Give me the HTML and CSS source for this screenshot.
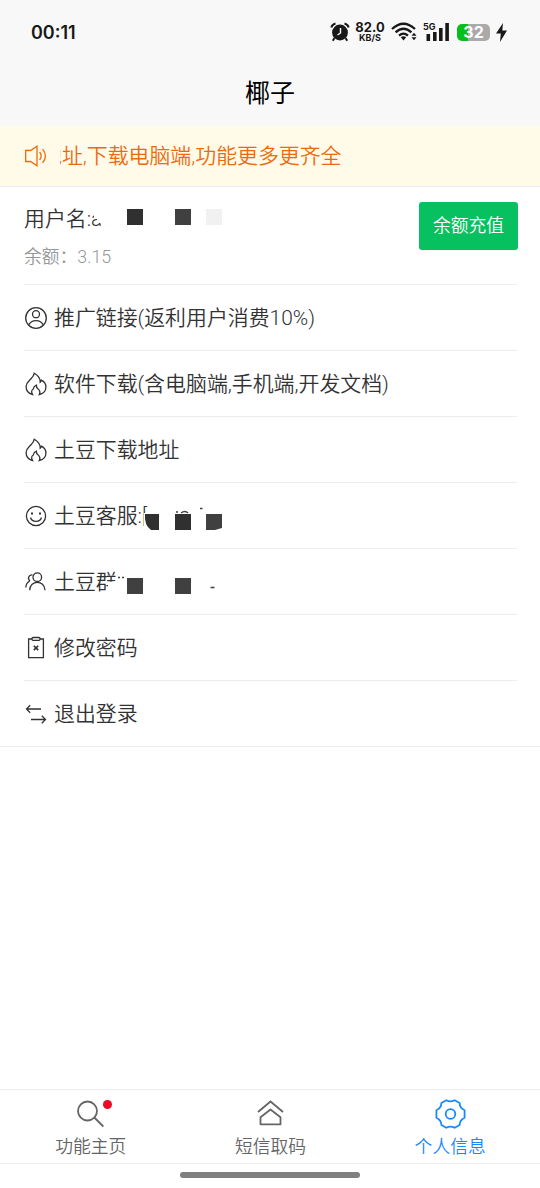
FILE: index.html
```html
<!DOCTYPE html>
<html lang="zh-CN">
<head>
    <meta charset="UTF-8">
    <meta name="viewport" content="width=device-width, initial-scale=1.0">
    <title>椰子</title>
    <link rel="stylesheet" href="styles.css">
</head>
<body>
    <div class="page">
        <header class="status-bar">
            <span class="time">00:11</span>
            <div class="status-icons">
                <svg class="alarm" width="20" height="20" viewBox="0 0 20 20">
                    <path d="M1.300 5.500 C1.800 3.500 3.300 2 5.500 1.500 M18.700 5.500 C18.200 3.500 16.700 2 14.500 1.500" fill="none" stroke="#181818" stroke-width="2"/>
                    <circle cx="10" cy="10.500" r="7.900" fill="#181818"/>
                    <path d="M4.500 16 L2.800 18.800 M15.500 16 L17.200 18.800" stroke="#181818" stroke-width="2"/>
                    <path d="M10.500 6 V11 L7.500 13" fill="none" stroke="#f8f8f8" stroke-width="1.400"/>
                </svg>
                <div class="speed"><b>82.0</b><i>KB/S</i></div>
                <svg class="wifi" width="26" height="20" viewBox="0 0 26 20">
                    <g fill="none" stroke="#181818" stroke-width="2.300">
                        <path d="M1 7 Q12.500 -3.600 24 7"/>
                        <path d="M4.600 10.400 Q12.500 3 20.400 10.400"/>
                        <path d="M8 13.700 Q12.500 9.600 17 13.700"/>
                    </g>
                    <path d="M9.800 15.300 Q12.500 13.300 15.200 15.300 L12.500 18.500 Z" fill="#181818"/>
                    <path d="M20.500 13.800 L23 10.800 L25.500 13.800 Z M20.500 15.300 L23 18.300 L25.500 15.300 Z" fill="#181818"/>
                </svg>
                <div class="signal">
                    <span>5G</span>
                    <svg width="26" height="20" viewBox="0 0 26 20">
                        <path d="M3.500 12h3.600v7H3.500z M10 10h3.600v9H10z M16 6h3.600v13H16z M22.300 1h3.600v18h-3.600z" fill="#181818"/>
                    </svg>
                </div>
                <div class="battery"><span>32</span></div>
                <svg class="bolt" width="11" height="19" viewBox="0 0 11 19">
                    <path d="M7 0 L0 10.500 H4.800 L4 19 L11 7.500 H6.300 Z" fill="#181818"/>
                </svg>
            </div>
        </header>
        <h1 class="nav-title">椰子</h1>

        <div class="notice">
            <svg width="24" height="24" viewBox="0 0 24 24" fill="none" stroke="#ed6a0c" stroke-width="1.300">
                <path d="M1.700 6.500 H6.500 L13 2.200 V21.800 L6.500 17.500 H1.700 Z"/>
                <path d="M15.600 8 Q18.800 12 15.600 16 M18.600 5.200 Q24.200 12 18.600 18.800"/>
            </svg>
            <div class="notice-wrap"><span>地址,下载电脑端,功能更多更齐全</span></div>
        </div>

        <div class="user">
            <div class="user-info">
                <div class="user-name">用户名:a
                    <svg class="mask" width="160" height="30" viewBox="84 203 160 30">
                        <path d="M94 203 H244 V233 H102 V224 L97 222 V217 L94 217 Z" fill="#fff"/>
                        <path d="M127 209h16v16h-16z" fill="#303030"/>
                        <path d="M175 209h16v16h-16z" fill="#404040"/>
                        <path d="M206 209h16v16h-16z" fill="#f1f1f1"/>
                    </svg>
                </div>
                <div class="balance">余额：3.15</div>
            </div>
            <button class="recharge" type="button">余额充值</button>
        </div>

        <div class="list">
            <div class="cell">
                <svg class="cell-icon" viewBox="0 0 24 24">
                    <circle cx="12" cy="12" r="10.300"/>
                    <circle cx="12" cy="8.200" r="3.500"/>
                    <path d="M4.700 19 C7.500 13.200 16.500 13.200 19.300 19"/>
                </svg>
                <span>推广链接(返利用户消费10%)</span>
            </div>
            <div class="cell">
                <svg class="cell-icon" viewBox="0 0 24 24">
                    <path d="M8.500 22.500 C4.500 21.500 2.100 18.500 2.100 14.500 C2.100 10.500 5 9 7.200 6.500 C9.300 4.500 10 3 10.300 1.200 C13.500 3 16.300 6.500 16.200 10.200 C16.900 9.700 17.200 9 17.300 8.200 C20 9.500 21.900 12 21.900 15 C21.900 18.700 19.300 21.700 15.300 22.500 C16.500 20 15.500 18 13.900 16.800 C12.800 15.900 12.300 14.800 12.400 13.200 C10.400 14 9.500 15.300 9.300 17 C7.300 18 7.200 20.300 8.500 22.500 Z"/>
                </svg>
                <span>软件下载(含电脑端,手机端,开发文档)</span>
            </div>
            <div class="cell">
                <svg class="cell-icon" viewBox="0 0 24 24">
                    <path d="M8.500 22.500 C4.500 21.500 2.100 18.500 2.100 14.500 C2.100 10.500 5 9 7.200 6.500 C9.300 4.500 10 3 10.300 1.200 C13.500 3 16.300 6.500 16.200 10.200 C16.900 9.700 17.200 9 17.300 8.200 C20 9.500 21.900 12 21.900 15 C21.900 18.700 19.300 21.700 15.300 22.500 C16.500 20 15.500 18 13.900 16.800 C12.800 15.900 12.300 14.800 12.400 13.200 C10.400 14 9.500 15.300 9.300 17 C7.300 18 7.200 20.300 8.500 22.500 Z"/>
                </svg>
                <span>土豆下载地址</span>
            </div>
            <div class="cell">
                <svg class="cell-icon" viewBox="0 0 24 24">
                    <circle cx="12" cy="12" r="9.600"/>
                    <path d="M6.500 13.500 C8 18.600 16 18.600 17.500 13.500"/>
                    <path d="M8 8.400v2.200 M16 8.400v2.200" stroke-width="2"/>
                </svg>
                <span>土豆客服:[</span>
                <svg class="mask mask-service" width="100" height="32" viewBox="144 500 100 32">
                    <path d="M150 500 H244 V532 H144 V513 H150 Z" fill="#fff"/>
                    <path d="M145 514 H159 V530 H151 Q144 525 145 514 Z" fill="#303030"/>
                    <path d="M175 514h16v16h-16z" fill="#303030"/>
                    <path d="M206 514h16v14l-7 2h-9z" fill="#404040"/>
                    <path d="M176 512h2 M181 513 Q185 510 188 513 M200 508.500h2.500" fill="none" stroke="#404040" stroke-width="1.500"/>
                </svg>
            </div>
            <div class="cell">
                <svg class="cell-icon" viewBox="0 0 24 24">
                    <circle cx="13.300" cy="7.200" r="4.300"/>
                    <path d="M5.700 20.200 C6 9.800 20.600 9.800 21 20.200 M8.400 5 C4.500 4.500 3.300 9 6 11 M6 11 C3.500 12 2 14.500 1.800 17.500"/>
                </svg>
                <span>土豆群</span>
                <svg class="mask mask-group" width="140" height="34" viewBox="104 566 140 34">
                    <path d="M118 566 H244 V600 H107 V590 L108 588 V582 L118 581 Z" fill="#fff"/>
                    <path d="M127 578h16v16h-16zM175 578h16v16h-16z" fill="#404040"/>
                    <path d="M118 577.500h2 M122 577.500h2 M210.500 587.500h4" stroke="#404040" stroke-width="1.500"/>
                </svg>
            </div>
            <div class="cell">
                <svg class="cell-icon" viewBox="0 0 24 24">
                    <path d="M8 3 H4.600 V21.700 H19.400 V3 H16"/>
                    <rect x="8" y="1.500" width="8" height="2.800" rx="1"/>
                    <path d="M9.800 9.700 L14.200 14.100 M14.200 9.700 L9.800 14.100" stroke-width="1.600"/>
                </svg>
                <span>修改密码</span>
            </div>
            <div class="cell">
                <svg class="cell-icon" viewBox="0 0 24 24">
                    <path d="M17 7 H2.500 M6.200 3.300 L2.500 7 L6.200 10.700 M7 17.500 H21.500 M17.800 13.800 L21.500 17.500 L17.800 21.200"/>
                </svg>
                <span>退出登录</span>
            </div>
        </div>

        <nav class="tabbar">
            <div class="tab">
                <div class="tab-icon">
                    <svg width="33" height="33" viewBox="0 0 33 33">
                        <circle cx="13.500" cy="13" r="9.500"/>
                        <path d="M20.300 19.500 L29.300 28.500"/>
                    </svg>
                    <span class="dot"></span>
                </div>
                <span>功能主页</span>
            </div>
            <div class="tab">
                <div class="tab-icon">
                    <svg width="33" height="33" viewBox="0 0 33 33">
                        <path d="M4 14 L16.500 3.500 L29 14"/>
                        <path d="M6.500 19.200 L16.500 11.500 L26.500 19.200 V26.300 H6.500 Z" stroke-linejoin="round"/>
                    </svg>
                </div>
                <span>短信取码</span>
            </div>
            <div class="tab active">
                <div class="tab-icon">
                    <svg width="33" height="33" viewBox="0 0 33 33">
                        <path d="M12.300 2.200 Q16.500 4.600 20.700 2.200 L25.600 5 Q25.600 9.800 30.600 12.200 V19.800 Q25.600 22.200 25.600 27 L20.700 29.800 Q16.500 27.400 12.300 29.800 L7.400 27 Q7.400 22.200 2.400 19.800 V12.200 Q7.400 9.800 7.400 5 Z" stroke-linejoin="round"/>
                        <circle cx="16.500" cy="16" r="4.800"/>
                    </svg>
                </div>
                <span>个人信息</span>
            </div>
        </nav>
        <div class="home-indicator"><span></span></div>
    </div>
</body>
</html>
```
FILE: styles.css
```css
* {
    box-sizing: border-box;
}
body {
    margin: 0;
    font-family: Roboto, "Noto Sans CJK SC", sans-serif;
    font-weight: 350;
    background-color: #fff;
    color: #323233;
}
.page {
    display: flex;
    flex-direction: column;
    height: 1188px;
}
.status-bar {
    display: flex;
    justify-content: space-between;
    align-items: center;
    height: 64px;
    padding: 0 33px 0 31px;
    background-color: #f8f8f8;
    color: #181818;
}
.time {
    font-family: Inter, sans-serif;
    font-size: 18px;
    font-weight: 600;
}
.status-icons {
    display: flex;
    align-items: center;
    font-family: Inter, sans-serif;
}
.speed {
    display: flex;
    flex-direction: column;
    align-items: center;
    width: 30px;
    margin: 0 6px 0 5px;
}
.speed b {
    font-size: 13px;
    line-height: 11px;
    font-weight: 700;
}
.speed i {
    font-size: 9px;
    line-height: 9px;
    font-style: normal;
    font-weight: 700;
}
.signal {
    position: relative;
    height: 20px;
    margin: 0 8px 0 6px;
}
.signal span {
    position: absolute;
    left: 0;
    top: 0;
    font-size: 9px;
    line-height: 9px;
    font-weight: 700;
}
.battery {
    width: 33px;
    height: 17px;
    border-radius: 5px;
    background: linear-gradient(to right, #06bf1b 11px, #aaa 11px);
    line-height: 17px;
    text-align: center;
}
.battery span {
    display: block;
    font-size: 16px;
    font-weight: 700;
    color: #fff;
}
.bolt {
    margin-left: 6px;
}
.nav-title {
    height: 62px;
    margin: 0;
    background-color: #f8f8f8;
    color: #000;
    font-size: 25px;
    font-weight: 400;
    line-height: 59px;
    text-align: center;
}
.notice {
    display: flex;
    align-items: center;
    height: 60px;
    padding: 0 24px;
    background-color: #fffbe8;
    color: #ed6a0c;
    font-size: 20.900px;
}
.notice-wrap {
    display: flex;
    flex: 1;
    margin-left: 12px;
    padding-bottom: 5px;
    overflow: hidden;
    white-space: nowrap;
}
.notice-wrap span {
    margin-left: -19px;
}
.user {
    display: flex;
    justify-content: space-between;
    height: 98px;
    padding: 0 22px 0 24px;
    border-top: 1px solid #ebedf0;
}
.user,
.notice,
.list {
    flex-shrink: 0;
}
.user-info {
    padding-top: 14px;
}
.user-name {
    position: relative;
    font-size: 20.900px;
    line-height: 36px;
}
.mask {
    position: absolute;
    left: 60px;
    top: 2px;
}
.balance {
    margin-top: 6px;
    font-size: 17.800px;
    line-height: 28px;
    color: #969799;
}
.recharge {
    width: 99px;
    height: 48px;
    margin-top: 15px;
    padding: 0 0 5px;
    border: none;
    border-radius: 3px;
    background-color: #07c160;
    color: #fff;
    font: inherit;
    font-size: 17.800px;
}
.list {
    border-bottom: 1px solid #ebedf0;
}
.cell {
    position: relative;
    display: flex;
    align-items: center;
    height: 66px;
    margin: 0 23px 0 24px;
    border-top: 1px solid #ebedf0;
    font-size: 20.900px;
}
.cell span {
    padding-bottom: 4px;
}
.cell-icon {
    width: 24px;
    height: 24px;
    margin-right: 6px;
    fill: none;
    stroke: #323233;
    stroke-width: 1.300;
}
.mask-service {
    left: 120px;
    top: 17px;
}
.mask-group {
    left: 80px;
    top: 17px;
}
.tabbar {
    display: flex;
    height: 75px;
    margin-top: auto;
    padding-left: 1px;
    border-top: 1px solid #ebedf0;
    border-bottom: 1px solid #ebedf0;
    color: #646566;
}
.tab {
    display: flex;
    flex: 1;
    flex-direction: column;
    align-items: center;
    padding-top: 8px;
    font-size: 17.800px;
    line-height: 32px;
}
.tab-icon {
    position: relative;
    height: 33px;
}
.tab-icon svg {
    display: block;
    fill: none;
    stroke: currentColor;
    stroke-width: 1.800;
}
.dot {
    position: absolute;
    right: -5px;
    top: 2px;
    width: 9px;
    height: 9px;
    border-radius: 50%;
    background-color: #ee0a24;
}
.active {
    color: #1989fa;
}
.home-indicator {
    display: flex;
    justify-content: center;
    height: 24px;
    padding-top: 8px;
}
.home-indicator span {
    width: 180px;
    height: 6px;
    border-radius: 3px;
    background-color: #808080;
}
```
